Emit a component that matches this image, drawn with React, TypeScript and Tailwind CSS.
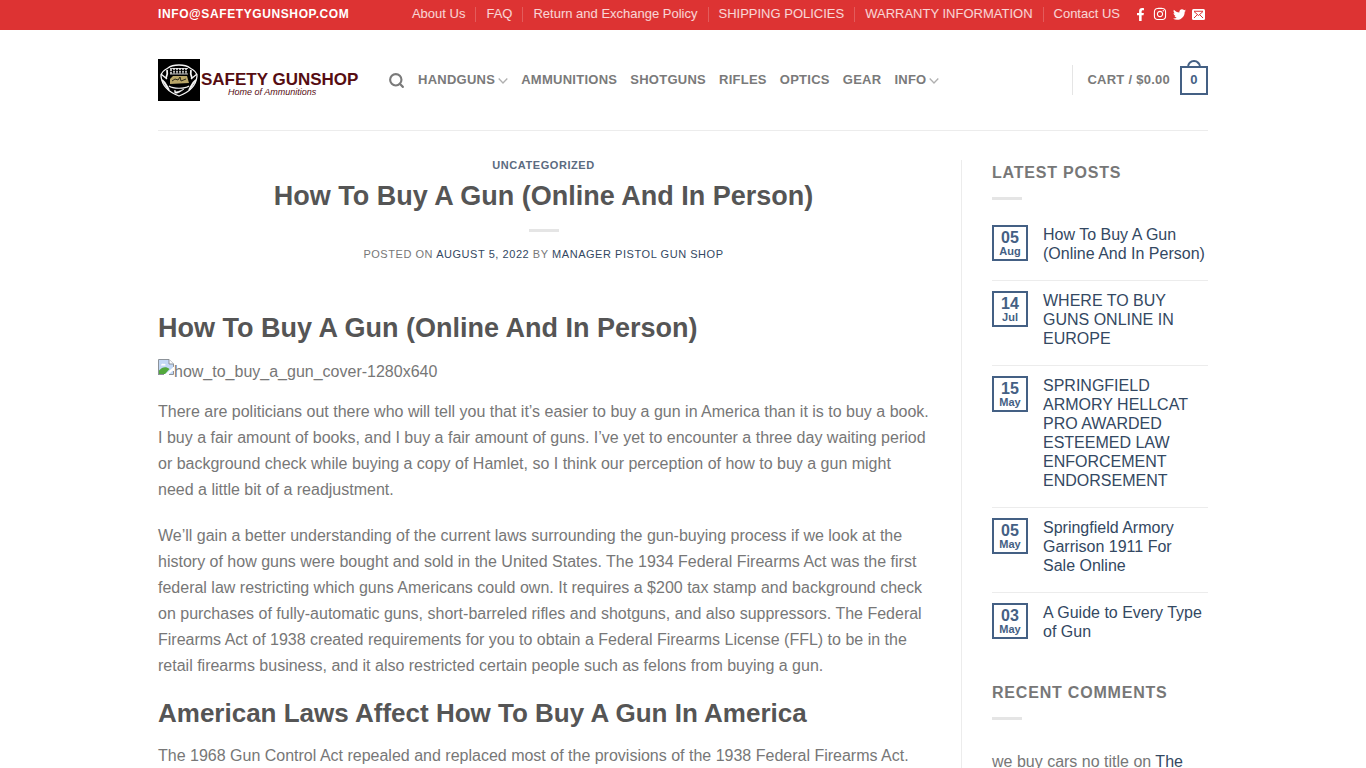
import { Search } from "lucide-react";
import { FaFacebookF, FaInstagram, FaTwitter } from "react-icons/fa";

const topLinks = [
  "About Us",
  "FAQ",
  "Return and Exchange Policy",
  "SHIPPING POLICIES",
  "WARRANTY INFORMATION",
  "Contact US",
];

const navigation = [
  { name: "Handguns", hasMenu: true },
  { name: "Ammunitions" },
  { name: "Shotguns" },
  { name: "Rifles" },
  { name: "Optics" },
  { name: "Gear" },
  { name: "Info", hasMenu: true },
];

const latestPosts = [
  { day: "05", month: "Aug", title: "How To Buy A Gun (Online And In Person)" },
  { day: "14", month: "Jul", title: "WHERE TO BUY GUNS ONLINE IN EUROPE" },
  {
    day: "15",
    month: "May",
    title: "SPRINGFIELD ARMORY HELLCAT PRO AWARDED ESTEEMED LAW ENFORCEMENT ENDORSEMENT",
  },
  { day: "05", month: "May", title: "Springfield Armory Garrison 1911 For Sale Online" },
  { day: "03", month: "May", title: "A Guide to Every Type of Gun" },
];

function MailIcon() {
  return (
    <svg viewBox="0 0 26 22" className="h-[11px] w-[13px]" aria-hidden="true">
      <rect width="26" height="22" rx="3" fill="currentColor" />
      <path
        d="M4 5l9 8 9-8M4 18l6-6M22 18l-6-6M4 4.5h18"
        fill="none"
        stroke="#dd3333"
        strokeWidth="2"
      />
    </svg>
  );
}

function CaretIcon() {
  return (
    <svg viewBox="0 0 10 8" className="mt-[2px] ml-[3px] h-2 w-[10px]" aria-hidden="true">
      <path d="M.7 1.500L5 6L9.300 1.500" fill="none" stroke="#b0b0b0" strokeWidth="1.3" />
    </svg>
  );
}

function FootballLogo() {
  return (
    <svg viewBox="0 0 42 42" className="size-[42px] shrink-0" aria-hidden="true">
      <rect width="42" height="42" fill="#000" />
      <g fill="none" stroke="#f4f4f4">
        <path d="M10 9C15 5 27 5 32 9" strokeWidth="1.6" />
        <path d="M10 9C6 11 3 14 3 17C4 28 13 34 21 37C29 34 38 28 39 17C39 14 36 11 32 9" strokeWidth="1.3" />
        <path d="M9 11C10 15 9 17 8 19M33 11C32 15 33 17 34 19" strokeWidth="1.8" />
        <path d="M3 15L9 20M39 15L33 20" strokeWidth="1.3" />
        <path d="M4 21C8 24 8 27 11 31M38 21C34 24 34 27 31 31" strokeWidth="2" />
        <path d="M11 27C15 30 27 30 31 27" strokeWidth="1.2" />
        <path d="M12 9.500H30M12 15H30" strokeWidth=".8" />
        <path d="M13 10v5M16 9v6M19 9v6M22 9v6M25 9v6M28 9v6" strokeWidth="1.5" strokeDasharray="2 .8" />
      </g>
      <path d="M12 20L15 17L29 17L31 24L12 25Z" fill="#b9a668" />
      <path d="M14 22L17 20L20 21L22 18L23 22L28 20" fill="none" stroke="#2d2818" />
      <path d="M17 31C17 34 20 33 26 30C20 35 15 36 17 31Z" fill="#fff" stroke="#fff" strokeWidth=".6" />
    </svg>
  );
}

function MissingImageIcon() {
  return (
    <svg viewBox="0 0 16 16" className="size-4 shrink-0" aria-hidden="true">
      <path d="M1 1h10l4 4v10H1z" fill="#c3d8f5" />
      <path d="M3 6.500c0-2 2-2 2.500-1.500C7 4 8.500 6.500 7 6.500z" fill="#fff" />
      <path d="M1 15v-3.500C4 8 8 7 11.500 10L7 15z" fill="#52a83c" />
      <path d="M.5 16V.5H11L15.500 5v3" fill="none" stroke="#8c9299" />
      <path d="M11 .5V5h4.500" fill="#fff" stroke="#8c9299" />
      <path d="M6.500 16L16 7.500v3L10 16z" fill="#fff" />
      <path d="M.5 15.500H6M11 15.500h4.500V12" fill="none" stroke="#8c9299" />
    </svg>
  );
}

function TopBar() {
  return (
    <div className="bg-[#dd3333] text-white">
      <div className="mx-auto flex h-[30px] max-w-[1080px] items-center justify-between px-[15px] pb-[2px]">
        <a href="#" className="text-xs font-bold tracking-wider">
          INFO@SAFETYGUNSHOP.COM
        </a>
        <div className="flex items-center">
          <ul className="flex items-center text-[13px] text-white/80">
            {topLinks.map((name, i) => (
              <li key={name} className="flex items-center">
                {i > 0 && <span className="mx-[10px] h-[15px] w-px bg-white/20" />}
                <a href="#">{name}</a>
              </li>
            ))}
          </ul>
          <div className="ml-[14px] mr-[3px] flex items-center gap-[6px]">
            <a href="#" aria-label="Facebook">
              <FaFacebookF className="size-[13px]" />
            </a>
            <a href="#" aria-label="Instagram">
              <FaInstagram className="size-[14px]" />
            </a>
            <a href="#" aria-label="Twitter">
              <FaTwitter className="size-[13px]" />
            </a>
            <a href="#" aria-label="Email">
              <MailIcon />
            </a>
          </div>
        </div>
      </div>
    </div>
  );
}

function Header() {
  return (
    <header className="mx-auto max-w-[1080px] px-[15px]">
      <div className="flex h-[101px] items-center border-b border-[#ececec]">
        <a href="#" className="mr-[30px] flex w-[200px] shrink-0 items-center">
          <FootballLogo />
          <span className="ml-px flex flex-col pt-2 whitespace-nowrap">
            <span className="text-[17px] leading-[17px] font-bold text-[#560d12]">
              SAFETY GUNSHOP
            </span>
            <span className="pl-[27px] text-[9px] leading-[9px] text-[#560d12] italic">
              Home of Ammunitions
            </span>
          </span>
        </a>
        <nav
          aria-label="Main"
          className="flex items-center gap-[13px] text-[13px] font-bold tracking-[0.02em] text-[#7a7a7a] uppercase"
        >
          <button type="button" aria-label="Search">
            <Search className="size-[17px]" strokeWidth={3} />
          </button>
          {navigation.map((item) => (
            <a key={item.name} href="#" className="flex items-center">
              {item.name}
              {item.hasMenu && <CaretIcon />}
            </a>
          ))}
        </nav>
        <a
          href="#"
          className="ml-auto flex items-center text-[13px] font-bold tracking-[0.02em] text-[#7a7a7a]"
        >
          <span className="mr-[14px] h-[30px] w-px bg-[#e5e5e5]" />
          CART / $0.00
          <span className="relative ml-[10px] flex h-[29px] w-7 items-center justify-center border-2 border-[#446084] text-[13px] text-[#446084]">
            <span className="absolute -top-2 left-[5px] h-[7px] w-[14px] rounded-t-full border-2 border-b-0 border-[#446084]" />
            0
          </span>
        </a>
      </div>
    </header>
  );
}

function WidgetTitle({ children }: { children: string }) {
  return (
    <>
      <h2 className="text-base leading-[26px] font-bold tracking-wider text-[#777]">{children}</h2>
      <div className="mt-[11px] h-[3px] w-[30px] bg-black/10" />
    </>
  );
}

function Sidebar() {
  return (
    <aside className="w-[247px] shrink-0 border-l border-[#ececec] pl-[30px]">
      <WidgetTitle>LATEST POSTS</WidgetTitle>
      <ul className="mt-[25px]">
        {latestPosts.map((post) => (
          <li
            key={post.title}
            className="flex gap-[15px] border-[#ececec] pb-[17px] not-first:border-t not-first:pt-[10px]"
          >
            <div className="flex h-9 w-9 shrink-0 flex-col items-center justify-center border-2 border-[#446084] font-bold text-[#446084]">
              <span className="text-base leading-4">{post.day}</span>
              <span className="text-[11px] leading-[11px]">{post.month}</span>
            </div>
            <a href="#" className="text-base leading-[19px] text-[#334862]">
              {post.title}
            </a>
          </li>
        ))}
      </ul>
      <div className="mt-[22px]">
        <WidgetTitle>RECENT COMMENTS</WidgetTitle>
        <p className="mt-[29px] leading-[26px]">
          we buy cars no title on{" "}
          <a href="#" className="text-[#334862]">
            The
          </a>
        </p>
      </div>
    </aside>
  );
}

function Article() {
  return (
    <article className="min-w-0 flex-1">
      <div className="flex flex-col items-center text-center">
        <a href="#" className="text-[11px] leading-[11px] font-bold tracking-wider text-[#5b6b80]">
          UNCATEGORIZED
        </a>
        <h1 className="mt-[7px] text-[27px] leading-9 font-bold text-[#555]">
          How To Buy A Gun (Online And In Person)
        </h1>
        <div className="mt-[15px] h-[3px] w-[30px] bg-black/10" />
        <p className="mt-[14px] text-[11px] leading-4 tracking-wider">
          POSTED ON{" "}
          <a href="#" className="text-[#334862]">
            AUGUST 5, 2022
          </a>{" "}
          BY{" "}
          <a href="#" className="text-[#334862]">
            MANAGER PISTOL GUN SHOP
          </a>
        </p>
      </div>

      <h2 className="mt-12 text-[27px] leading-9 font-bold text-[#555]">
        How To Buy A Gun (Online And In Person)
      </h2>
      <div className="mt-[13px] flex items-start">
        <MissingImageIcon />
        <span className="leading-[26px]">how_to_buy_a_gun_cover-1280x640</span>
      </div>
      <p className="mt-[14px] leading-[26px]">
        There are politicians out there who will tell you that it’s easier to buy a gun in America
        than it is to buy a book. I buy a fair amount of books, and I buy a fair amount of guns.
        I’ve yet to encounter a three day waiting period or background check while buying a copy of
        Hamlet, so I think our perception of how to buy a gun might need a little bit of a
        readjustment.
      </p>
      <p className="mt-5 leading-[26px]">
        We’ll gain a better understanding of the current laws surrounding the gun-buying process if
        we look at the history of how guns were bought and sold in the United States. The 1934
        Federal Firearms Act was the first federal law restricting which guns Americans could own.
        It requires a $200 tax stamp and background check on purchases of fully-automatic guns,
        short-barreled rifles and shotguns, and also suppressors. The Federal Firearms Act of 1938
        created requirements for you to obtain a Federal Firearms License (FFL) to be in the retail
        firearms business, and it also restricted certain people such as felons from buying a gun.
      </p>
      <h2 className="mt-4 text-[26px] leading-9 font-bold text-[#555]">
        American Laws Affect How To Buy A Gun In America
      </h2>
      <p className="mt-3 leading-[26px]">
        The 1968 Gun Control Act repealed and replaced most of the provisions of the 1938 Federal
        Firearms Act.
      </p>
    </article>
  );
}

export default function App() {
  return (
    <div className="h-dvh overflow-hidden bg-white font-['Liberation_Sans',Arial,sans-serif] text-base text-[#777]">
      <TopBar />
      <Header />
      <main className="mx-auto flex max-w-[1080px] gap-8 px-[15px] pt-[29px]">
        <Article />
        <Sidebar />
      </main>
    </div>
  );
}
